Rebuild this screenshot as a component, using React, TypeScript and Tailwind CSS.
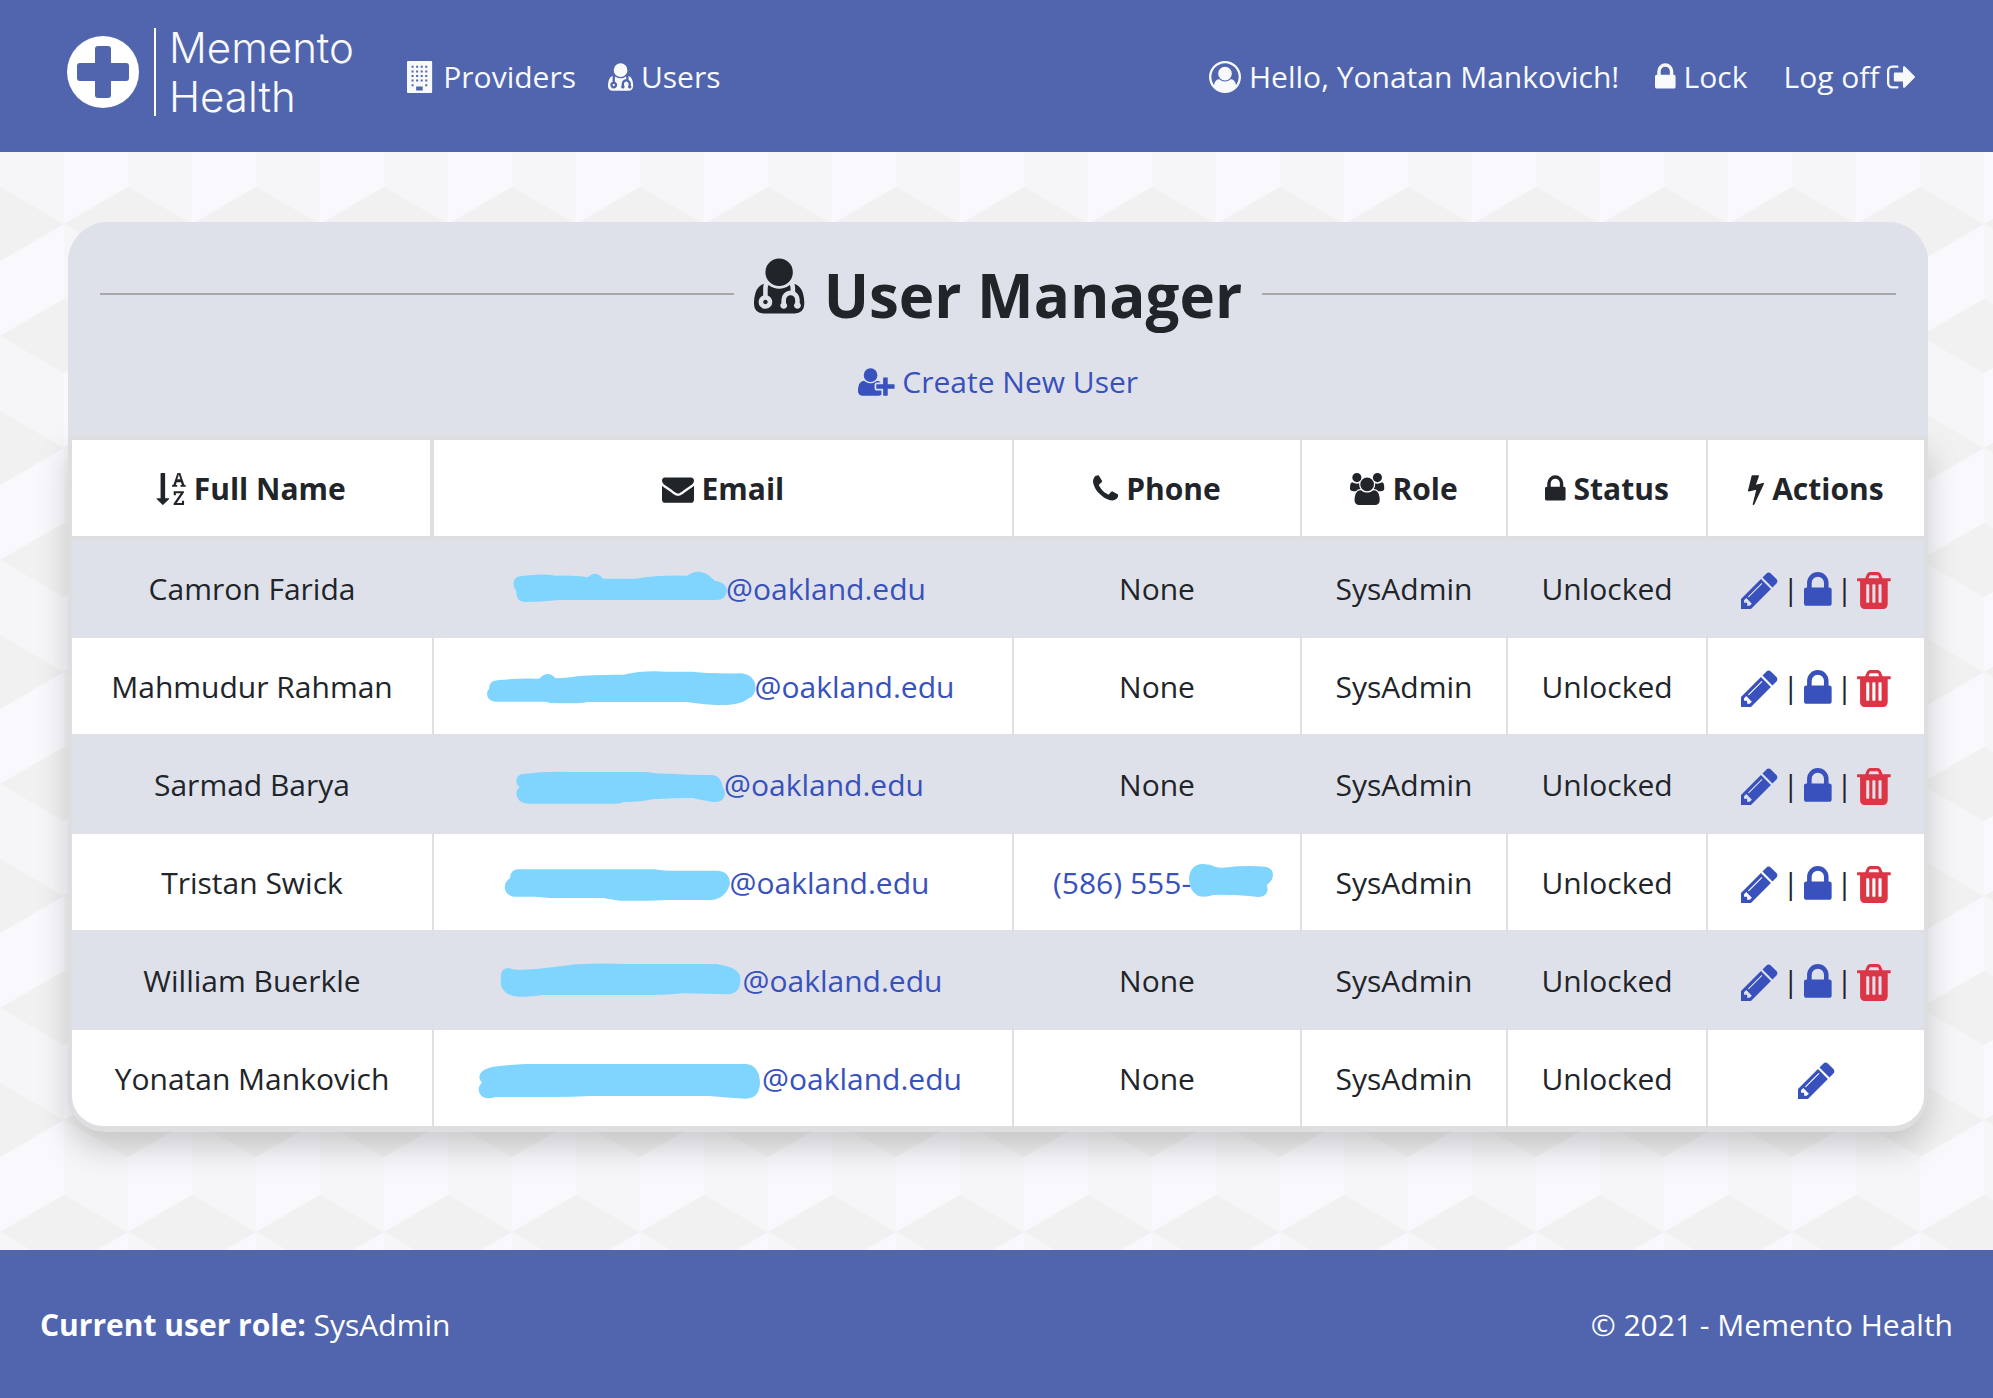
import type { ReactNode } from "react";

const ICONS = {
  lock: {
    x: 320,
    w: 1152,
    d: "M640 768h512v-192q0-106-75-181t-181-75-181 75-75 181v192zm832 96v576q0 40-28 68t-68 28h-960q-40 0-68-28t-28-68v-576q0-40 28-68t68-28h32v-192q0-184 132-316t316-132 316 132 132 316v192h32q40 0 68 28t28 68z",
  },
  pencil: {
    x: 128,
    w: 1536,
    d: "M491 1536l91-91-235-235-91 91v107h128v128h107zm523-928q0-22-22-22-10 0-17 7l-542 542q-7 7-7 17 0 22 22 22 10 0 17-7l542-542q7-7 7-17zm-54-192l416 416-832 832h-416v-416zm683 96q0 53-37 90l-166 166-416-416 166-165q36-38 90-38 53 0 91 38l235 234q37 39 37 91z",
  },
  trash: {
    x: 192,
    w: 1408,
    d: "M704 1376v-704q0-14-9-23t-23-9h-64q-14 0-23 9t-9 23v704q0 14 9 23t23 9h64q14 0 23-9t9-23zm256 0v-704q0-14-9-23t-23-9h-64q-14 0-23 9t-9 23v704q0 14 9 23t23 9h64q14 0 23-9t9-23zm256 0v-704q0-14-9-23t-23-9h-64q-14 0-23 9t-9 23v704q0 14 9 23t23 9h64q14 0 23-9t9-23zm-544-992h448l-48-117q-7-9-17-11h-317q-10 2-17 11zm928 32v64q0 14-9 23t-23 9h-96v948q0 83-47 143.5t-113 60.5h-832q-66 0-113-58.5t-47-141.5v-952h-96q-14 0-23-9t-9-23v-64q0-14 9-23t23-9h309l70-167q15-37 54-63t79-26h320q40 0 79 26t54 63l70 167h309q14 0 23 9t9 23z",
  },
  envelope: {
    x: 0,
    w: 1792,
    d: "M1792 710v794q0 66-47 113t-113 47h-1472q-66 0-113-47t-47-113v-794q44 49 101 87 362 246 497 345 57 42 92.5 65.5t94.5 48 110 24.5h2q51 0 110-24.5t94.5-48 92.5-65.5q170-123 498-345 57-39 100-87zm0-294q0 79-49 151t-122 123q-376 261-468 325-10 7-42.5 31t-54 38.5-52 32.5-57.5 27-50 9h-2q-23 0-50-9t-57.5-27-52-32.5-54-38.5-42.5-31q-91-64-262-182.5t-205-142.5q-62-42-117-115.5t-55-136.5q0-78 41.5-130t118.5-52h1472q65 0 112.5 47t47.5 113z",
  },
  phone: {
    x: 192,
    w: 1408,
    d: "M1600 1240q0 27-10 70.5t-21 68.5q-21 50-122 106-94 51-186 51-27 0-53-3.5t-57.5-12.5-47-14.5-55.5-20.5-49-18q-98-35-175-83-127-79-264-216t-216-264q-48-77-83-175-3-9-18-49t-20.5-55.5-14.5-47-12.5-57.5-3.5-53q0-92 51-186 56-101 106-122 25-11 68.5-21t70.5-10q14 0 21 3 18 6 53 76 11 19 30 54t35 63.5 31 53.5q3 4 17.5 25t21.5 35.5 7 28.5q0 20-28.5 50t-62 55-62 53-28.5 46q0 9 5 22.5t8.5 20.5 14 24 11.5 19q76 137 174 235t235 174q2 1 19 11.5t24 14 20.5 8.5 22.5 5q18 0 46-28.5t53-62 55-62 50-28.5q14 0 28.5 7t35.5 21.5 25 17.5q25 15 53.5 31t63.5 35 54 30q70 35 76 53 3 7 3 21z",
  },
  bolt: {
    x: 448,
    w: 896,
    d: "M1333 566q18 20 7 44l-540 1157q-13 25-42 25-4 0-14-2-17-5-25.5-19t-4.5-30l197-808-406 101q-4 1-12 1-18 0-31-11-18-15-13-39l201-825q4-14 16-23t28-9h328q19 0 32 12.5t13 29.5q0 8-5 18l-171 463 396-98q8-2 12-2 19 0 34 15z",
  },
  users: {
    x: 0,
    w: 1920,
    d: "M593 896q-162 5-265 128h-134q-82 0-138-40.5t-56-118.5q0-353 124-353 6 0 43.5 21t97.5 42.5 119 21.5q67 0 133-23-5 37-5 66 0 139 81 256zm1071 637q0 120-73 189.5t-194 69.5h-874q-121 0-194-69.5t-73-189.5q0-53 3.5-103.5t14-109 26.5-108.5 43-97.5 62-81 85.5-53.5 111.5-20q10 0 43 21.5t73 48 107 48 135 21.5 135-21.5 107-48 73-48 43-21.5q61 0 111.5 20t85.5 53.5 62 81 43 97.5 26.5 108.5 14 109 3.5 103.5zm-1024-1277q0 106-75 181t-181 75-181-75-75-181 75-181 181-75 181 75 75 181zm704 384q0 159-112.5 271.5t-271.5 112.5-271.5-112.5-112.5-271.5 112.5-271.5 271.5-112.5 271.5 112.5 112.5 271.5zm576 225q0 78-56 118.5t-138 40.5h-134q-103-123-265-128 81-117 81-256 0-29-5-66 66 23 133 23 59 0 119-21.5t97.5-42.5 43.5-21q124 0 124 353zm-128-609q0 106-75 181t-181 75-181-75-75-181 75-181 181-75 181 75 75 181z",
  },
  userPlus: {
    x: 0,
    w: 2048,
    d: "M704 896q-159 0-271.5-112.5t-112.5-271.5 112.5-271.5 271.5-112.5 271.5 112.5 112.5 271.5-112.5 271.5-271.5 112.5zm960 128h352q13 0 22.5 9.5t9.5 22.5v192q0 13-9.5 22.5t-22.5 9.5h-352v352q0 13-9.5 22.5t-22.5 9.5h-192q-13 0-22.5-9.5t-9.5-22.5v-352h-352q-13 0-22.5-9.5t-9.5-22.5v-192q0-13 9.5-22.5t22.5-9.5h352v-352q0-13 9.5-22.5t22.5-9.5h192q13 0 22.5 9.5t9.5 22.5v352zm-736 224q0 52 38 90t90 38h256v238q-68 50-171 50h-874q-121 0-194-69t-73-190q0-53 3.5-103.5t14-109 26.5-108.5 43-97.5 62-81 85.5-53.5 111.5-20q19 0 39 17 79 61 154.5 91.5t164.5 30.5 164.5-30.5 154.5-91.5q20-17 39-17 132 0 217 96h-223q-52 0-90 38t-38 90v192z",
  },
  userCircle: {
    x: 0,
    w: 1792,
    d: "M896 0q182 0 348 71t286 191 191 286 71 348q0 181-70.5 347t-190.5 286-286 191.5-349 71.5-349-71-285.5-191.5-190.5-286-71-347.5 71-348 191-286 286-191 348-71zm619 1351q149-205 149-455 0-156-61-298t-164-245-245-164-298-61-298 61-245 164-164 245-61 298q0 250 149 455 66-327 306-327 131 128 313 128t313-128q240 0 306 327zm-235-647q0-159-112.5-271.5t-271.5-112.5-271.5 112.5-112.5 271.5 112.5 271.5 271.5 112.5 271.5-112.5 112.5-271.5z",
  },
  userMd: {
    x: 192,
    w: 1408,
    d: "M576 1344q0 26-19 45t-45 19-45-19-19-45 19-45 45-19 45 19 19 45zm1024 61q0 121-73 190t-194 69h-874q-121 0-194-69t-73-190q0-68 5.5-131t24-138 47.5-132.5 81-103 120-60.5q-22 52-22 120v203q-58 20-93 70t-35 111q0 80 56 136t136 56 136-56 56-136q0-61-35.5-111t-92.5-70v-203q0-62 25-93 132 104 295 104t295-104q25 31 25 93v64q-106 0-181 75t-75 181v89q-32 29-32 71 0 40 28 68t68 28 68-28 28-68q0-42-32-71v-89q0-52 38-90t90-38 90 38 38 90v89q-32 29-32 71 0 40 28 68t68 28 68-28 28-68q0-42-32-71v-89q0-68-34.5-127.5t-93.5-93.5q0-10 .5-42.5t0-48-2.5-41.5-7-47-13-40q68 15 120 60.5t81 103 47.5 132.5 24 138 5.5 131zm-320-893q0 159-112.5 271.5t-271.5 112.5-271.5-112.5-112.5-271.5 112.5-271.5 271.5-112.5 271.5 112.5 112.5 271.5z",
  },
  building: {
    x: 0,
    w: 1600,
    d: "M1344 0q26 0 45 19t19 45v1664q0 26-19 45t-45 19h-1280q-26 0-45-19t-19-45v-1664q0-26 19-45t45-19zM256 272v112h112v-112zM512 272v112h112v-112zM768 272v112h112v-112zM1024 272v112h112v-112zM256 528v112h112v-112zM512 528v112h112v-112zM768 528v112h112v-112zM1024 528v112h112v-112zM256 784v112h112v-112zM512 784v112h112v-112zM768 784v112h112v-112zM1024 784v112h112v-112zM256 1040v112h112v-112zM512 1040v112h112v-112zM768 1040v112h112v-112zM1024 1040v112h112v-112zM256 1296v112h112v-112zM1024 1296v112h112v-112zM512 1424v224h368v-224z",
  },
  signOut: {
    x: 64,
    w: 1664,
    d: "M704 1440q0 4 1 20t.5 26.5-3 23.5-10 19.5-20.5 6.5h-320q-119 0-203.5-84.5t-84.5-203.5v-704q0-119 84.5-203.5t203.5-84.5h320q13 0 22.5 9.5t9.5 22.5q0 4 1 20t.5 26.5-3 23.5-10 19.5-20.5 6.5h-320q-66 0-113 47t-47 113v704q0 66 47 113t113 47h312l11.5 1 11.5 3 8 5.5 7 9 2 13.5zm928-544q0 26-19 45l-544 544q-19 19-45 19t-45-19-19-45v-288h-448q-26 0-45-19t-19-45v-384q0-26 19-45t45-19h448v-288q0-26 19-45t45-19 45 19l544 544q19 19 19 45z",
  },
  sortAlpha: {
    x: 0,
    w: 1664,
    d: "M1191 352h177l-72-218-12-47q-2-16-2-20h-4l-3 20q0 1-3.5 18t-7.5 29zm-455 1088q0 12-10 24l-319 319q-10 9-23 9-12 0-23-9l-320-320q-15-16-7-35 8-20 30-20h192v-1376q0-14 9-23t23-9h192q14 0 23 9t9 23v1376h192q14 0 23 9t9 23zm836 123v229h-584v-90l369-529q12-18 21-27l11-9v-3q-2 0-6.5.5t-7.5.5q-12 3-30 3h-232v115h-120v-229h567v89l-369 530q-6 8-21 26l-11 11v2l14-2q9-2 30-2h248v-119h121zm89-897v106h-288v-106h75l-47-144h-243l-47 144h75v106h-287v-106h70l230-662h162l230 662h70z",
  },
};

type IconName = keyof typeof ICONS;

function Icon({ name, className = "h-8 align-[-5px]" }: { name: IconName; className?: string }) {
  const icon = ICONS[name];
  return (
    <svg
      aria-hidden="true"
      viewBox={`${icon.x} 0 ${icon.w} 1792`}
      className={`inline-block w-auto overflow-visible ${className}`}
      fill="currentColor"
      fillRule="evenodd"
    >
      <path d={icon.d} />
    </svg>
  );
}

type Marker = { box: string; width: string; d: string };

type User = { name: string; marker: Marker; phone?: string; self?: boolean };

const USERS: User[] = [
  {
    name: "Camron Farida",
    marker: {
      box: "183 75 617 144",
      width: "w-[206px]",
      d: "M163 130Q165 108 188 108Q245 99 290 107Q350 105 386 112Q408 88 432 116H530Q600 104 683 107Q718 84 748 106L768 123Q804 128 803 154Q800 180 770 180H300Q250 186 195 186Q170 184 171 152Q163 145 163 130Z",
    },
  },
  {
    name: "Mahmudur Rahman",
    marker: {
      box: "96 369 790 144",
      width: "w-[263px]",
      d: "M87 447Q87 422 112 421Q170 414 237 416Q264 388 287 415Q330 414 350 409Q400 403 490 404Q550 390 620 395H700Q740 401 840 400Q885 402 888 443Q886 470 863 477Q840 497 770 495Q720 492 680 486H384Q370 492 270 489L258 485H105Q82 482 81 462Q81 452 87 447Z",
    },
  },
  {
    name: "Sarmad Barya",
    marker: {
      box: "188 663 607 144",
      width: "w-[202px]",
      d: "M171 722Q172 702 195 701Q270 693 330 696H560Q600 703 640 701Q700 706 760 705Q787 708 791 740Q800 755 797 767Q792 788 760 786Q730 781 700 774Q650 774 580 778Q540 787 492 786Q485 792 465 791H205Q174 790 171 760Q172 748 181 741Q172 736 171 722Z",
    },
  },
  {
    name: "Tristan Swick",
    phone: "(586) 555-",
    marker: {
      box: "171 117 640 144",
      width: "w-[213px]",
      d: "M150 172Q153 148 175 148H585Q620 154 680 152H775Q810 155 811 192Q797 237 755 240H620Q590 243 480 242L430 234H270L225 230H160Q135 224 134 202Q136 182 150 175Z",
    },
  },
  {
    name: "William Buerkle",
    marker: {
      box: "133 411 717 144",
      width: "w-[239px]",
      d: "M124 465Q125 444 148 444Q160 450 180 449L228 447Q290 441 350 433Q420 428 500 432H770Q842 442 842 475Q844 523 800 523L670 520Q620 526 560 525H250Q210 532 175 530Q126 525 123 490Z",
    },
  },
  {
    name: "Yonatan Mankovich",
    self: true,
    marker: {
      box: "74 705 835 144",
      width: "w-[278px]",
      d: "M60 772Q60 748 103 740Q150 734 200 732H860Q902 735 903 790Q900 837 860 836Q800 833 750 828H390Q320 832 110 831Q80 840 67 829Q48 808 68 787Q60 782 60 772Z",
    },
  },
];

function Redaction({ box, width, d }: Marker) {
  return (
    <svg aria-hidden="true" viewBox={box} className={`h-12 shrink-0 overflow-visible text-[#80d5ff] ${width}`}>
      <path d={d} fill="currentColor" />
    </svg>
  );
}

const COLUMNS: { label: string; icon: IconName; width: string }[] = [
  { label: "Full Name", icon: "sortAlpha", width: "w-[362px]" },
  { label: "Email", icon: "envelope", width: "w-[580px]" },
  { label: "Phone", icon: "phone", width: "w-[288px]" },
  { label: "Role", icon: "users", width: "w-[206px]" },
  { label: "Status", icon: "lock", width: "w-[200px]" },
  { label: "Actions", icon: "bolt", width: "w-[216px]" },
];

function Logo() {
  return (
    <a href="#home" className="flex items-center">
      <svg aria-hidden="true" viewBox="0 0 72 72" className="size-[72px] text-white">
        <circle cx="36" cy="36" r="36" fill="currentColor" />
        <path
          d="M31 10h10a3 3 0 0 1 3 3v14h15a3 3 0 0 1 3 3v12a3 3 0 0 1-3 3h-15v14a3 3 0 0 1-3 3h-10a3 3 0 0 1-3-3v-14h-15a3 3 0 0 1-3-3v-12a3 3 0 0 1 3-3h15v-14a3 3 0 0 1 3-3z"
          fill="#5065ae"
        />
      </svg>
      <span className="ml-[15px] border-l-2 border-white pl-[13px] font-[Inter,sans-serif] text-[42px] leading-[49px] font-light">
        <span className="-my-[5px] block">
          Memento
          <br />
          Health
        </span>
      </span>
    </a>
  );
}

function NavLink({ href, children }: { href: string; children: ReactNode }) {
  return (
    <a href={href} className="whitespace-nowrap">
      {children}
    </a>
  );
}

function Backdrop() {
  return (
    <svg aria-hidden="true" className="absolute inset-0 -z-10 size-full">
      <defs>
        <pattern id="cubes" width="128" height="224" y="72" patternUnits="userSpaceOnUse">
          <rect width="128" height="224" fill="#f6f6f8" />
          <path d="M0 0H64V112H0zM64 112H128V224H64z" fill="#f9f9fd" />
          <path
            d="M0 -37L64 0L0 37L-64 0zM128 -37L192 0L128 37L64 0zM0 187L64 224L0 261L-64 224zM128 187L192 224L128 261L64 224zM64 75L128 112L64 149L0 112z"
            fill="#f1f1f1"
          />
        </pattern>
      </defs>
      <rect width="100%" height="100%" fill="url(#cubes)" />
    </svg>
  );
}

function Divider() {
  return <span className="-mx-[3px]"> | </span>;
}

function Actions({ user }: { user: User }) {
  const size = "h-[43px] align-[-12px]";
  return (
    <span className="whitespace-nowrap">
      <a href="#edit" aria-label={`Edit ${user.name}`} className="text-[#3851bd]">
        <Icon name="pencil" className={size} />
      </a>
      {!user.self && (
        <>
          <Divider />
          <a href="#lock" aria-label={`Lock ${user.name}`} className="text-[#3851bd]">
            <Icon name="lock" className={size} />
          </a>
          <Divider />
          <a href="#delete" aria-label={`Delete ${user.name}`} className="text-[#dc3545]">
            <Icon name="trash" className={size} />
          </a>
        </>
      )}
    </span>
  );
}

export default function App() {
  return (
    <div className="flex min-h-screen flex-col font-['Open_Sans',sans-serif] text-[30px] leading-12 text-[#212529]">
      <header className="flex items-start bg-[#5065ae] pt-7 pr-[76px] pb-9 pl-[67px] text-[#f8f9fa]">
        <Logo />
        <nav className="mt-[25px] ml-[53px] flex flex-1 items-center gap-8">
          <NavLink href="#providers">
            <Icon name="building" /> Providers
          </NavLink>
          <NavLink href="#users">
            <Icon name="userMd" /> Users
          </NavLink>
          <div className="ml-auto flex gap-9">
            <NavLink href="#account">
              <Icon name="userCircle" /> Hello, Yonatan Mankovich!
            </NavLink>
            <NavLink href="#lock-session">
              <Icon name="lock" /> Lock
            </NavLink>
            <NavLink href="#logoff">
              Log off <Icon name="signOut" />
            </NavLink>
          </div>
        </nav>
      </header>

      <main className="relative isolate flex-1 pt-[70px] pr-[65px] pb-[118px] pl-17">
        <Backdrop />
        <section className="rounded-t-[40px] rounded-b-[36px] bg-[#dfe1ea]">
          <div className="relative z-10 flex flex-col items-center rounded-t-[40px] bg-[#dfe1ea] px-8 pt-8 pb-[30px]">
            <div className="flex w-full items-center gap-5">
              <hr className="flex-1 border-t-2 border-[#a5a7ab]" />
              <h1 className="text-[60px] leading-[78px] font-bold">
                <Icon name="userMd" className="mr-1 h-16 align-baseline" /> User Manager
              </h1>
              <hr className="flex-1 border-t-2 border-[#a5a7ab]" />
            </div>
            <a href="#create" className="mt-6 text-[#3851bd]">
              <Icon name="userPlus" /> Create New User
            </a>
          </div>
          <div className="overflow-hidden rounded-b-[36px] border-4 border-b-[6px] border-[#dddee0] bg-white shadow-[0_16px_32px_rgba(0,0,0,0.18)]">
            <table className="w-full border-separate border-spacing-0 text-center">
              <thead>
                <tr>
                  {COLUMNS.map((column) => (
                    <th
                      key={column.label}
                      scope="col"
                      className={`border-r-2 border-b-4 border-[#dddee0] pt-[25px] pb-[23px] font-bold whitespace-nowrap first:border-r-4 last:border-r-0 ${column.width}`}
                    >
                      <Icon name={column.icon} /> {column.label}
                    </th>
                  ))}
                </tr>
              </thead>
              <tbody className="[&_td]:border-r-2 [&_td]:border-b-2 [&_td]:border-[#dee0e6] [&_td]:pt-[25px] [&_td]:pb-[23px] [&_td]:whitespace-nowrap [&_td:last-child]:border-r-0 [&_tr:last-child>td]:border-b-0 [&_tr:nth-child(odd)]:bg-[#dfe1ea]">
                {USERS.map((user) => (
                  <tr key={user.name}>
                    <td>{user.name}</td>
                    <td>
                      <a href="#email" className="flex justify-center text-[#3851bd]">
                        <Redaction {...user.marker} />
                        @oakland.edu
                      </a>
                    </td>
                    <td>
                      {user.phone ? (
                        <a href="#phone" className="flex justify-center text-[#3851bd]">
                          {user.phone}
                          <Redaction
                            box="453 57 210 144"
                            width="w-[70px]"
                            d="M447 115Q450 74 488 72Q510 72 530 82Q550 85 590 79Q640 77 675 80Q699 84 699 106Q697 126 680 135Q686 150 678 162Q670 171 655 171Q580 163 520 165Q495 174 475 168Q447 155 447 115Z"
                          />
                        </a>
                      ) : (
                        "None"
                      )}
                    </td>
                    <td>SysAdmin</td>
                    <td>Unlocked</td>
                    <td>
                      <Actions user={user} />
                    </td>
                  </tr>
                ))}
              </tbody>
            </table>
          </div>
        </section>
      </main>

      <footer className="flex items-center justify-between bg-[#5065ae] px-10 pt-[51px] pb-[49px] text-white">
        <p>
          <b>Current user role:</b> SysAdmin
        </p>
        <p>© 2021 - Memento Health</p>
      </footer>
    </div>
  );
}
